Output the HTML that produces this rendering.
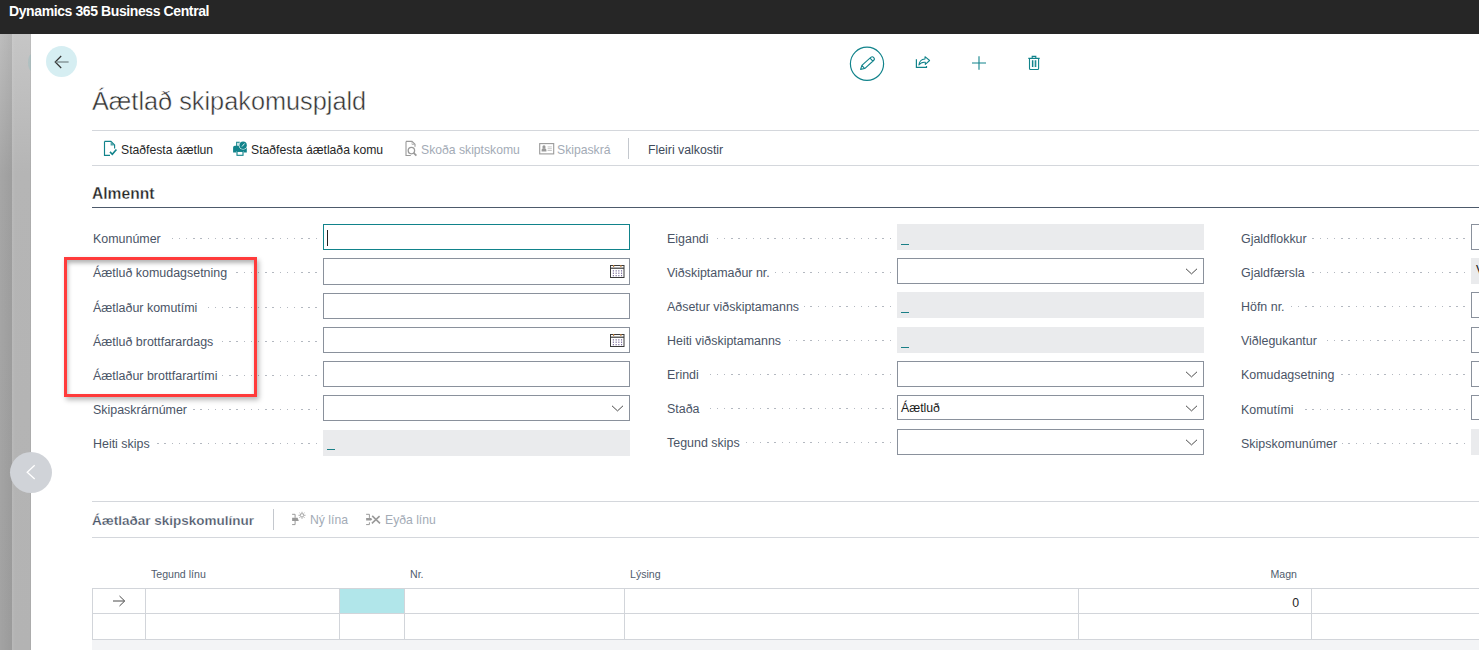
<!DOCTYPE html>
<html><head><meta charset="utf-8">
<style>
*{margin:0;padding:0;box-sizing:border-box}
html,body{width:1479px;height:650px;overflow:hidden;background:#fff;font-family:"Liberation Sans",sans-serif}
.a{position:absolute}
.t{position:absolute;white-space:nowrap;line-height:14px}
.row{position:absolute;height:14px;display:flex;align-items:flex-start}
.row .tx{font-size:12.45px;color:#4a5466;white-space:nowrap;line-height:14px}
.row .dots{flex:1;height:1px;margin-left:5px;margin-top:6px;background:repeating-linear-gradient(to left,#b3b8c0 0 1.5px,transparent 1.5px 7.2px)}
.box{position:absolute;height:25px;border:1px solid #8a919c;background:#fff}
.ro{position:absolute;height:25px;background:#eaebed}
.us{position:absolute;width:7.5px;height:1.4px;background:#1a7f87;left:4px;top:20px}
.chev{position:absolute;right:5px;top:8px}
.cal{position:absolute;left:286px;top:6px}
.act{font-size:12.2px;color:#262626}
.dis{font-size:12.2px;color:#a3abb6}
.val{position:absolute;left:3px;top:5px;font-size:12.3px;color:#1a1a1a;line-height:14px;white-space:nowrap}
.hl{position:absolute;background:#d2d5da}
.vl{position:absolute;background:#d2d5da;width:1px}
.th{position:absolute;font-size:10.6px;color:#505c6d;line-height:12px;white-space:nowrap}
</style></head><body>
<div class="a" style="left:0;top:0;width:1479px;height:34px;background:#262626"></div>
<div class="t" style="left:9px;top:4px;font-size:14px;letter-spacing:-0.4px;font-weight:700;color:#fff">Dynamics 365 Business Central</div>
<div class="a" style="left:0;top:34px;width:31px;height:616px;background:linear-gradient(#c6c6c6 0,#b5b5b5 140px,#b3b3b3 100%)"></div>
<div class="a" style="left:0;top:34px;width:12px;height:616px;background:linear-gradient(#bdbdbd 0,#a6a6a6 140px,#a3a3a3 100%)"></div>
<div class="a" style="left:0;top:34px;width:12px;height:616px;background:linear-gradient(to right,rgba(0,0,0,0),rgba(0,0,0,.05))"></div>
<div class="a" style="left:12px;top:34px;width:3px;height:616px;background:linear-gradient(to right,rgba(255,255,255,.08),rgba(255,255,255,0))"></div>
<div class="a" style="left:30px;top:34px;width:1px;height:616px;background:rgba(0,0,0,.04)"></div>
<div class="a" style="left:26px;top:54px;width:5px;height:17px;overflow:hidden"><div class="a" style="left:2px;top:0;width:8px;height:17px;border-radius:50%;background:rgba(140,185,190,.35)"></div></div>
<div class="a" style="left:46px;top:46px;width:31px;height:31px;border-radius:50%;background:#d6eef2"></div>
<svg class="a" style="left:46px;top:46px" width="31" height="31" viewBox="0 0 31 31"><path d="M15.2 10 L9.2 16 L15.2 22" fill="none" stroke="#333" stroke-width="1.2"/><path d="M9.6 16 H22.6" stroke="#7a8a8c" stroke-width="1.3"/></svg>
<svg class="a" style="left:840px;top:40px" width="210" height="50" viewBox="840 40 210 50"><circle cx="867" cy="63.8" r="16.6" fill="none" stroke="#11838b" stroke-width="1.2"/><g transform="translate(860.6 69.4) rotate(-42)"><path d="M0 0 L3.6 -2.1 H15.6 Q17.7 -2.1 17.7 0 Q17.7 2.1 15.6 2.1 H3.6 Z M3.6 -2.1 V2.1 M14.6 -2.1 V2.1" fill="none" stroke="#11838b" stroke-width="1.1" stroke-linejoin="round"/></g><path d="M916.4 59.2 V67.4 H926.5 V66" fill="none" stroke="#11838b" stroke-width="1.2"/><path d="M918.9 65 C919.2 61.4 921.2 59.2 925 58.9 L925 56.7 L929.6 60.5 L925.3 64.4 L925.3 62.3 C922.5 61.9 920.4 62.8 918.9 65 Z" fill="none" stroke="#11838b" stroke-width="1.05" stroke-linejoin="round"/><path d="M972 63 H986 M979 56.3 V69.7" stroke="#11838b" stroke-width="1.1"/><path d="M1028.3 58.4 H1039.7 M1032.2 58.4 V56.4 H1035.8 V58.4 M1029.5 58.4 V68.5 Q1029.5 69.5 1030.5 69.5 H1037.6 Q1038.6 69.5 1038.6 68.5 V58.4" fill="none" stroke="#11838b" stroke-width="1.1"/><rect x="1032.5" y="60.3" width="3.2" height="6.8" fill="#11838b" opacity=".3"/><path d="M1032.5 60.3 V67.1 M1035.7 60.3 V67.1" stroke="#11838b" stroke-width="1.2"/></svg>
<div class="t" style="left:92px;top:86px;font-size:25.3px;line-height:30px;color:#333;-webkit-text-stroke:0.45px #fff">Áætlað skipakomuspjald</div>
<div class="hl" style="left:92px;top:130px;width:1387px;height:1px;background:#d4d7dc"></div>
<div class="hl" style="left:92px;top:165px;width:1387px;height:1px;background:#d4d7dc"></div>
<svg class="a" style="left:100px;top:138px" width="20" height="20" viewBox="0 0 20 20"><path d="M4.5 3.4 H10.9 L14.6 7.1 V10.4 M4.5 3.4 V17.4 H10" fill="none" stroke="#11838b" stroke-width="1.15"/><path d="M10.6 4 V7.4 H14 Z" fill="#11838b" opacity=".75"/><path d="M10 13.9 L12.3 16.2 L16.4 11.4" fill="none" stroke="#11838b" stroke-width="1.6"/></svg>
<div class="t act" style="left:121px;top:143px">Staðfesta áætlun</div>
<svg class="a" style="left:230px;top:138px" width="20" height="20" viewBox="0 0 20 20"><path d="M6.7 8 V4.3 H9.3 V8" fill="none" stroke="#11838b" stroke-width="1.1"/><path d="M3.1 9.5 Q3.1 7.8 4.8 7.8 H15.1 Q16.8 7.8 16.8 9.5 V14.5 H13.6 V12.9 H6.4 V14.5 H3.1 Z" fill="#11838b"/><rect x="7" y="13.4" width="6" height="3.9" fill="#fff" stroke="#11838b" stroke-width="1.1"/><circle cx="13.1" cy="7.2" r="4.4" fill="#fff"/><circle cx="13.1" cy="7.2" r="3.7" fill="#11838b"/><path d="M12 8.5 L14.6 5.5" stroke="#fff" stroke-width="0.9"/></svg>
<div class="t act" style="left:251px;top:143px">Staðfesta áætlaða komu</div>
<svg class="a" style="left:401px;top:138px" width="20" height="20" viewBox="0 0 20 20"><path d="M5 3.4 H11 L14 6.3 V8.8 M5 3.4 V17.5 H9.8" fill="none" stroke="#9a9a9a" stroke-width="1.1"/><path d="M11 3.6 V6.5 H13.8" fill="none" stroke="#b0b0b0" stroke-width="0.8"/><circle cx="10.4" cy="12.6" r="3.2" fill="none" stroke="#9a9a9a" stroke-width="1.3"/><path d="M12.6 14.9 L15.4 17.6" stroke="#9a9a9a" stroke-width="1.8"/></svg>
<div class="t dis" style="left:421px;top:143px">Skoða skiptskomu</div>
<svg class="a" style="left:538px;top:142px" width="17" height="14" viewBox="0 0 17 14"><rect x="1.7" y="1.6" width="14" height="10.3" fill="#fff" stroke="#9a9a9a" stroke-width="1.1"/><path d="M3.6 9.6 V8 Q3.6 6.2 5.3 6.2 H6.7 Q8.4 6.2 8.4 8 V9.6 Z" fill="#999"/><circle cx="6" cy="4.9" r="1.6" fill="#999"/><g fill="#c8c8c8"><rect x="9.6" y="4.4" width="4.2" height="1"/><rect x="9.6" y="6.2" width="4.2" height="1"/><rect x="9.6" y="8" width="4.2" height="1"/></g></svg>
<div class="t dis" style="left:557px;top:143px">Skipaskrá</div>
<div class="vl" style="left:628px;top:138px;height:21px;background:#c4c8ce"></div>
<div class="t" style="left:648px;top:143px;font-size:12.3px;color:#404a5a">Fleiri valkostir</div>
<div class="t" style="left:92px;top:185px;font-size:15.6px;line-height:18px;font-weight:700;color:#262626;-webkit-text-stroke:0.3px #fff">Almennt</div>
<div class="hl" style="left:92px;top:207px;width:1387px;height:1px;background:#4d5a6b"></div>
<div class="row" style="left:93px;top:232px;width:224px"><span class="tx">Komunúmer</span><span class="dots"></span></div>
<div class="box" style="left:323px;top:224px;height:26px;width:307px;border-color:#11838b"><div class="a" style="left:3px;top:5px;width:1px;height:16px;background:#222"></div></div>
<div class="row" style="left:93px;top:266px;width:224px"><span class="tx">Áætluð komudagsetning</span><span class="dots"></span></div>
<div class="box" style="left:323px;top:258px;height:27px;width:307px"><svg class="cal" width="15" height="14" viewBox="0 0 15 14"><rect x="0.5" y="0.5" width="13.5" height="12" fill="#fff" stroke="#3a3a3a" stroke-width="1"/><path d="M0.5 3.2 H14" stroke="#3a3a3a" stroke-width="1.2"/><rect x="3" y="0" width="1.2" height="2" fill="#c08040"/><rect x="10.3" y="0" width="1.2" height="2" fill="#c08040"/><g fill="#7a6a9a"><rect x="2.8" y="5.2" width="1.1" height="1.3"/><rect x="5.6" y="5.2" width="1.1" height="1.3"/><rect x="8.3" y="5.2" width="1.1" height="1.3"/><rect x="11" y="5.2" width="1.1" height="1.3"/><rect x="2.8" y="7.6" width="1.1" height="1.3"/><rect x="5.6" y="7.6" width="1.1" height="1.3"/><rect x="8.3" y="7.6" width="1.1" height="1.3"/><rect x="11" y="7.6" width="1.1" height="1.3"/><rect x="2.8" y="10" width="1.1" height="1.3"/><rect x="5.6" y="10" width="1.1" height="1.3"/><rect x="8.3" y="10" width="1.1" height="1.3"/><rect x="11" y="10" width="1.1" height="1.3"/></g></svg></div>
<div class="row" style="left:93px;top:301px;width:224px"><span class="tx">Áætlaður komutími</span><span class="dots"></span></div>
<div class="box" style="left:323px;top:293px;height:26px;width:307px"></div>
<div class="row" style="left:93px;top:335px;width:224px"><span class="tx">Áætluð brottfarardags</span><span class="dots"></span></div>
<div class="box" style="left:323px;top:327px;height:26px;width:307px"><svg class="cal" width="15" height="14" viewBox="0 0 15 14"><rect x="0.5" y="0.5" width="13.5" height="12" fill="#fff" stroke="#3a3a3a" stroke-width="1"/><path d="M0.5 3.2 H14" stroke="#3a3a3a" stroke-width="1.2"/><rect x="3" y="0" width="1.2" height="2" fill="#c08040"/><rect x="10.3" y="0" width="1.2" height="2" fill="#c08040"/><g fill="#7a6a9a"><rect x="2.8" y="5.2" width="1.1" height="1.3"/><rect x="5.6" y="5.2" width="1.1" height="1.3"/><rect x="8.3" y="5.2" width="1.1" height="1.3"/><rect x="11" y="5.2" width="1.1" height="1.3"/><rect x="2.8" y="7.6" width="1.1" height="1.3"/><rect x="5.6" y="7.6" width="1.1" height="1.3"/><rect x="8.3" y="7.6" width="1.1" height="1.3"/><rect x="11" y="7.6" width="1.1" height="1.3"/><rect x="2.8" y="10" width="1.1" height="1.3"/><rect x="5.6" y="10" width="1.1" height="1.3"/><rect x="8.3" y="10" width="1.1" height="1.3"/><rect x="11" y="10" width="1.1" height="1.3"/></g></svg></div>
<div class="row" style="left:93px;top:369px;width:224px"><span class="tx">Áætlaður brottfarartími</span><span class="dots"></span></div>
<div class="box" style="left:323px;top:361px;height:26px;width:307px"></div>
<div class="row" style="left:93px;top:403px;width:224px"><span class="tx">Skipaskrárnúmer</span><span class="dots"></span></div>
<div class="box" style="left:323px;top:395px;height:26px;width:307px"><svg class="chev" width="13" height="8" viewBox="0 0 13 8"><path d="M1 1.8 L6.5 6.9 L12 1.8" fill="none" stroke="#4a4a4a" stroke-width="1"/></svg></div>
<div class="row" style="left:93px;top:437px;width:224px"><span class="tx">Heiti skips</span><span class="dots"></span></div>
<div class="ro" style="left:323px;top:430px;height:26px;width:307px"><div class="us" style="top:19px"></div></div>
<div class="row" style="left:667px;top:232px;width:224px"><span class="tx">Eigandi</span><span class="dots"></span></div>
<div class="ro" style="left:897px;top:224px;height:26px;width:307px"><div class="us"></div></div>
<div class="row" style="left:667px;top:266px;width:224px"><span class="tx">Viðskiptamaður nr.</span><span class="dots"></span></div>
<div class="box" style="left:897px;top:258px;height:26px;width:307px"><svg class="chev" width="13" height="8" viewBox="0 0 13 8"><path d="M1 1.8 L6.5 6.9 L12 1.8" fill="none" stroke="#4a4a4a" stroke-width="1"/></svg></div>
<div class="row" style="left:667px;top:300px;width:224px"><span class="tx">Aðsetur viðskiptamanns</span><span class="dots"></span></div>
<div class="ro" style="left:897px;top:292px;height:26px;width:307px"><div class="us"></div></div>
<div class="row" style="left:667px;top:334px;width:224px"><span class="tx">Heiti viðskiptamanns</span><span class="dots"></span></div>
<div class="ro" style="left:897px;top:327px;height:26px;width:307px"><div class="us"></div></div>
<div class="row" style="left:667px;top:368px;width:224px"><span class="tx">Erindi</span><span class="dots"></span></div>
<div class="box" style="left:897px;top:361px;height:26px;width:307px"><svg class="chev" width="13" height="8" viewBox="0 0 13 8"><path d="M1 1.8 L6.5 6.9 L12 1.8" fill="none" stroke="#4a4a4a" stroke-width="1"/></svg></div>
<div class="row" style="left:667px;top:402px;width:224px"><span class="tx">Staða</span><span class="dots"></span></div>
<div class="box" style="left:897px;top:395px;height:25px;width:307px"><span class="val">Áætluð</span><svg class="chev" width="13" height="8" viewBox="0 0 13 8"><path d="M1 1.8 L6.5 6.9 L12 1.8" fill="none" stroke="#4a4a4a" stroke-width="1"/></svg></div>
<div class="row" style="left:667px;top:436px;width:224px"><span class="tx">Tegund skips</span><span class="dots"></span></div>
<div class="box" style="left:897px;top:429px;height:26px;width:307px"><svg class="chev" width="13" height="8" viewBox="0 0 13 8"><path d="M1 1.8 L6.5 6.9 L12 1.8" fill="none" stroke="#4a4a4a" stroke-width="1"/></svg></div>
<div class="row" style="left:1241px;top:232px;width:224px"><span class="tx">Gjaldflokkur</span><span class="dots"></span></div>
<div class="box" style="left:1471px;top:224px;height:26px;width:307px"></div>
<div class="row" style="left:1241px;top:266px;width:224px"><span class="tx">Gjaldfærsla</span><span class="dots"></span></div>
<div class="ro" style="left:1471px;top:258px;height:26px;width:307px"><span class="val" style="left:5px">V</span></div>
<div class="row" style="left:1241px;top:300px;width:224px"><span class="tx">Höfn nr.</span><span class="dots"></span></div>
<div class="box" style="left:1471px;top:292px;height:26px;width:307px"></div>
<div class="row" style="left:1241px;top:334px;width:224px"><span class="tx">Viðlegukantur</span><span class="dots"></span></div>
<div class="box" style="left:1471px;top:327px;height:26px;width:307px"></div>
<div class="row" style="left:1241px;top:368px;width:224px"><span class="tx">Komudagsetning</span><span class="dots"></span></div>
<div class="box" style="left:1471px;top:361px;height:26px;width:307px"></div>
<div class="row" style="left:1241px;top:403px;width:224px"><span class="tx">Komutími</span><span class="dots"></span></div>
<div class="box" style="left:1471px;top:395px;height:25px;width:307px"></div>
<div class="row" style="left:1241px;top:437px;width:224px"><span class="tx">Skipskomunúmer</span><span class="dots"></span></div>
<div class="ro" style="left:1471px;top:429px;height:26px;width:307px"></div>
<div class="a" style="left:64px;top:257px;width:193px;height:140px;border:3px solid #ff3b3b;box-shadow:2px 3px 5px rgba(0,0,0,.28), inset 1px 3px 4px rgba(0,0,0,.3)"></div>
<div class="a" style="left:10px;top:452px;width:42px;height:41px;border-radius:50%;background:#d0d3d8"></div>
<svg class="a" style="left:10px;top:452px" width="42" height="41" viewBox="0 0 42 41"><path d="M24.7 13.3 L17.2 20.2 L24.7 27" fill="none" stroke="#fff" stroke-width="1.3"/></svg>
<div class="hl" style="left:92px;top:501px;width:1387px;height:1px;background:#d4d7dc"></div>
<div class="hl" style="left:92px;top:537px;width:1387px;height:1px;background:#d4d7dc"></div>
<div class="t" style="left:92px;top:513px;font-size:13.5px;line-height:16px;font-weight:700;color:#4b5668;-webkit-text-stroke:0.25px #fff">Áætlaðar skipskomulínur</div>
<div class="vl" style="left:273px;top:509px;height:21px;background:#c4c8ce"></div>
<svg class="a" style="left:288px;top:508px" width="20" height="22" viewBox="0 0 20 22"><path d="M4.1 6.3 H7.1 V9.8 M7.1 12.9 V16.6 H4.1" fill="none" stroke="#9a9a9a" stroke-width="1"/><path d="M4.1 9.8 H9.6 L10.8 12.9 H4.1 Z" fill="#999"/><circle cx="14" cy="7.3" r="1.7" fill="none" stroke="#a0a0a0" stroke-width="0.9"/><path d="M16.10 7.30 L17.50 7.30 M15.48 8.78 L16.47 9.77 M14.00 9.40 L14.00 10.80 M12.52 8.78 L11.53 9.77 M11.90 7.30 L10.50 7.30 M12.52 5.82 L11.53 4.83 M14.00 5.20 L14.00 3.80 M15.48 5.82 L16.47 4.83 " stroke="#a0a0a0" stroke-width="0.9"/></svg>
<div class="t dis" style="left:310px;top:513px">Ný lína</div>
<svg class="a" style="left:362px;top:508px" width="22" height="22" viewBox="0 0 22 22"><path d="M4.1 6.3 H7.4 V9.9 M7.4 14.3 V16.6 H4.1" fill="none" stroke="#9a9a9a" stroke-width="1"/><path d="M4.1 9.9 H9 L10.3 11.2 L9 12.5 H4.1 Z" fill="#999"/><path d="M10.2 7.9 L18 15.4 M17.6 8.2 L9.9 15.3" stroke="#9a9a9a" stroke-width="1.6"/></svg>
<div class="t dis" style="left:385px;top:513px">Eyða línu</div>
<div class="th" style="left:151px;top:568px">Tegund línu</div>
<div class="th" style="left:410px;top:568px">Nr.</div>
<div class="th" style="left:630px;top:568px">Lýsing</div>
<div class="th" style="left:1240px;top:568px;width:57px;text-align:right">Magn</div>
<div class="a" style="left:340px;top:589px;width:64px;height:24px;background:#b1e6ea"></div>
<div class="hl" style="left:92px;top:588px;width:1387px;height:1px"></div>
<div class="hl" style="left:92px;top:613px;width:1387px;height:1px"></div>
<div class="hl" style="left:92px;top:639px;width:1387px;height:1px"></div>
<div class="vl" style="left:92px;top:588px;height:52px"></div>
<div class="vl" style="left:145px;top:588px;height:52px"></div>
<div class="vl" style="left:339px;top:588px;height:52px"></div>
<div class="vl" style="left:404px;top:588px;height:52px"></div>
<div class="vl" style="left:624px;top:588px;height:52px"></div>
<div class="vl" style="left:1078px;top:588px;height:52px"></div>
<div class="vl" style="left:1311px;top:588px;height:52px"></div>
<div class="a" style="left:92px;top:640px;width:1387px;height:10px;background:#f3f4f6"></div>
<svg class="a" style="left:110px;top:594px" width="18" height="14" viewBox="0 0 18 14"><path d="M3 7 H14.5 M9.5 2 L14.7 7 L9.5 12" fill="none" stroke="#4a4a4a" stroke-width="1"/></svg>
<div class="t" style="left:1250px;top:596px;width:49px;text-align:right;font-size:12.3px;color:#262626">0</div>
</body></html>
